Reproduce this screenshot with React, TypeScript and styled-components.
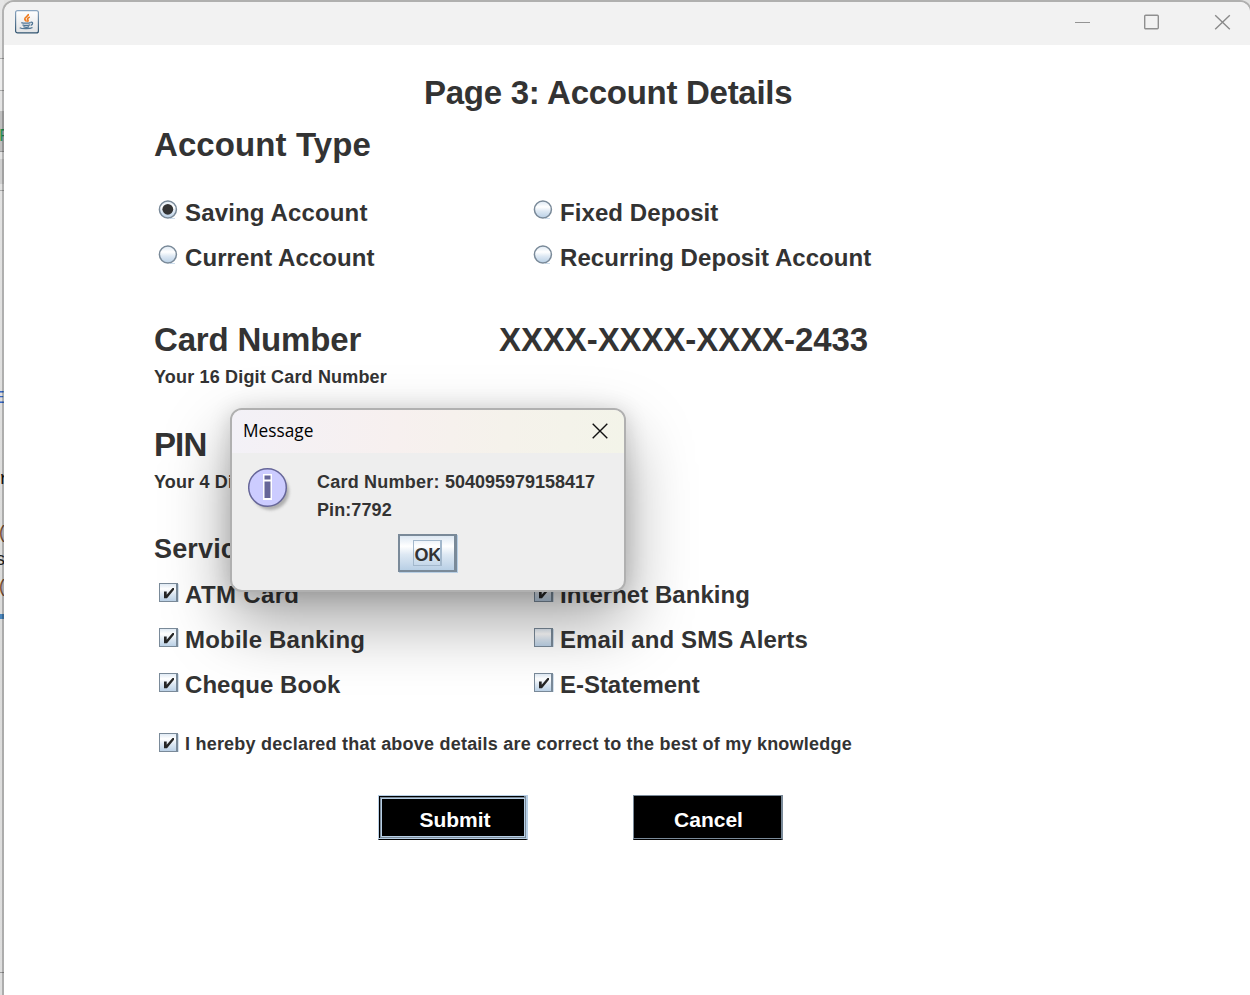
import React from "react";
import styled, { createGlobalStyle } from "styled-components";

const GlobalStyle = createGlobalStyle`
  * { box-sizing: border-box; }
  html, body { margin: 0; padding: 0; background: #fff; overflow: hidden; }
  body { font-family: "Liberation Sans", Arial, sans-serif; }
`;

const Desktop = styled.div`
  display: flex;
  width: 1250px;
  height: 995px;
  overflow: hidden;
  background: #e2e2e1;
`;

const Sliver = styled.div`
  flex: none;
  width: 4px;
  height: 995px;
  overflow: hidden;
  display: flex;
  flex-direction: column;
  background: linear-gradient(#e6e6e6, #dcdcdb 60%, #dedede);
`;

const SliverPart = styled.div<{ $h: number; $bg?: string }>`
  flex: none;
  height: ${(p) => p.$h}px;
  background: ${(p) => p.$bg ?? "transparent"};
`;

const SliverGlyph = styled.div<{ $h: number; $color: string; $shift: number }>`
  flex: none;
  height: ${(p) => p.$h}px;
  font: 18px / ${(p) => p.$h}px "Liberation Mono", monospace;
  color: ${(p) => p.$color};
  text-indent: ${(p) => p.$shift}px;
  white-space: nowrap;
`;

const Frame = styled.main`
  flex: none;
  width: 1250px;
  height: 1000px;
  margin-left: -2px;
  border: 2px solid rgba(0, 0, 0, 0.22);
  border-radius: 12px 12px 0 0;
  background: #fff;
  background-clip: padding-box;
  overflow: hidden;
`;

const TitleBar = styled.header`
  display: flex;
  align-items: center;
  justify-content: space-between;
  height: 43px;
  padding: 0 19px 3px 11px;
  background: #f2f2f2;
`;

const WindowControls = styled.div`
  display: flex;
  gap: 54px;
`;

const Content = styled.section`
  display: flex;
  flex-direction: column;
  padding: 25px 0 0 150px;
  color: #333;
  font-weight: 700;
`;

const Row = styled.div<{ $gap?: number; $h?: number; $indent?: number }>`
  display: flex;
  align-items: center;
  height: ${(p) => p.$h ?? 45}px;
  margin-top: ${(p) => p.$gap ?? 0}px;
  padding-left: ${(p) => p.$indent ?? 0}px;
  white-space: nowrap;
`;

const Text = styled.span<{ $size: number; $track?: number; $w?: number }>`
  flex: none;
  font-size: ${(p) => p.$size}px;
  line-height: 1;
  letter-spacing: ${(p) => p.$track ?? 0}px;
  width: ${(p) => (p.$w ? `${p.$w}px` : "auto")};
`;

const Option = styled.label<{ $lift?: number }>`
  display: flex;
  align-items: center;
  flex: none;
  width: 375px;
  padding-left: 4px;
  svg { flex: none; margin: 0 7px ${(p) => p.$lift ?? 4}px 0; }
`;

const BlackButton = styled.button<{ $focused?: boolean }>`
  width: 150px;
  height: 45px;
  padding: 4px 0 0 2px;
  border: solid ${(p) => (p.$focused ? "#b8cfe5" : "#7a8a99")};
  border-width: 1px 2px 1px 1px;
  border-bottom: 1px solid #000;
  background: #000;
  color: #fff;
  font: 700 21px "Liberation Sans", Arial, sans-serif;
  box-shadow: ${(p) =>
    p.$focused
      ? "inset 0 -1px #b8cfe5, inset -2px 0 #7a8a99, inset 1px 1px #000, inset 2px 2px #7a8a99, inset 0 -2px #7a8a99"
      : "inset 0 -1px #7a8a99"};
`;

const FocusRing = styled.span`
  display: flex;
  align-items: center;
  justify-content: center;
  width: 144px;
  height: 39px;
  margin: -4px 0 0 0;
  padding: 5px 0 0 4px;
  border: 1px solid #b8cfe5;
`;

const Buttons = styled.div`
  display: flex;
  gap: 105px;
  margin: 36px 0 0 224px;
`;

const Dialog = styled.div`
  position: absolute;
  left: 230px;
  top: 408px;
  width: 396px;
  height: 184px;
  border: 2px solid #b0b0b0;
  border-radius: 12px;
  background: #eee;
  background-clip: padding-box;
  overflow: hidden;
  color: #333;
  font-weight: 700;
  box-shadow: 0 30px 66px rgba(0, 0, 0, 0.36), 0 2px 22px rgba(0, 0, 0, 0.16);
`;

const DialogTitle = styled.div`
  display: flex;
  align-items: center;
  justify-content: space-between;
  height: 43px;
  padding: 0 16px 2px 11px;
  background: linear-gradient(95deg, #f3f1f7, #f7f0ef 42%, #f5f2eb 70%, #f3f4e9);
  color: #000;
  font: 400 17.300px "Open Sans", "Noto Sans", sans-serif;
`;

const DialogBody = styled.div`
  display: flex;
  gap: 23px;
  height: 79px;
  padding: 14px 0 0 14px;
`;

const Lines = styled.div`
  display: flex;
  flex-direction: column;
  padding-top: 1px;
`;

const DialogActions = styled.div`
  display: flex;
  justify-content: center;
  padding: 2px 1px 0 0;
`;

const OkButton = styled.button`
  display: flex;
  justify-content: center;
  align-items: center;
  width: 59px;
  height: 38px;
  padding: 0;
  border: solid #7a8a99;
  border-width: 2px 3px 2px 2px;
  background: linear-gradient(#dde8f3, #fff 30%, #dde8f3 55%, #b8cfe5);
  box-shadow: 1px 1px #b8cfe5;
`;

const OkLabel = styled.span`
  width: 29px;
  height: 26px;
  padding-left: 1px;
  overflow: hidden;
  border: 1px solid #a3b8cc;
  border-right-width: 2px;
  color: #333;
  font: 700 18px/28px "Liberation Sans", Arial, sans-serif;
  letter-spacing: -0.3px;
  text-align: left;
`;

const JavaIcon = () => (
  <svg width="24" height="24" viewBox="0 0 24 24">
    <defs>
      <linearGradient id="jb" x2="0" y2="1">
        <stop offset="0" stopColor="#8aa5c0" />
        <stop offset="1" stopColor="#315470" />
      </linearGradient>
      <linearGradient id="jf" x2="0" y2="1">
        <stop offset="0" stopColor="#fff" />
        <stop offset="1" stopColor="#e1e3e5" />
      </linearGradient>
    </defs>
    <rect x=".6" y=".6" width="22.8" height="22.3" rx="2" fill="url(#jf)" stroke="url(#jb)" strokeWidth="1.2" />
    <path d="M13.3 4c.8 2-3.8 3-3.500 5 .2 1.300 1.500 1.600 1.300 2.700M14.800 7c-2.200 1-2.800 2-1.900 3 .5.700 0 1.300-.6 1.700" fill="none" stroke="#ef7d21" strokeWidth="1.700" />
    <path d="M6.300 12.600c2 .8 7.500.7 9.200 0M7.500 14.800c2 .7 5.500.700 7.500 0M8.400 16.700c1.500.6 4.300.6 5.700 0M15.600 12.400c2.600-.9 2.700 2 .1 2.900M4.700 17.700c2.300 1.400 10.500 1.400 12.800-.3" fill="none" stroke="#517695" strokeWidth="1.300" />
  </svg>
);

const Radio = ({ on }: { on?: boolean }) => (
  <svg width="20" height="20" viewBox="0 0 20 20">
    <defs>
      <linearGradient id="rg" x2="0" y2="1">
        <stop offset="0" stopColor="#dde8f3" />
        <stop offset=".35" stopColor="#fff" />
        <stop offset=".6" stopColor="#dde8f3" />
        <stop offset="1" stopColor="#b8cfe5" />
      </linearGradient>
    </defs>
    <path d="M12 18.500h5" stroke="#cfdfee" />
    <circle cx="9.900" cy="9.500" r="8.500" fill="url(#rg)" stroke="#7a8a99" strokeWidth="1.500" />
    {on && <circle cx="9.800" cy="9.300" r="5.400" fill="#333" />}
  </svg>
);

const Check = ({ on }: { on?: boolean }) => (
  <svg width="20" height="20" viewBox="0 0 20 20" overflow="visible">
    <path d="M20.500 1v18" stroke="#d3e1ee" />
    <rect x="1.500" y=".5" width="18" height="18" fill="url(#cg)" stroke="#7a8a99" />
    <path d="M19 0v19" stroke="#7a8a99" strokeWidth="2" />
    {on && <path d="M6 8.500h2.700v3.300L14.500 5H16v1.700l-7 8.600H6z" fill="#262626" />}
    <defs>
      <linearGradient id="cg" x2="0" y2="1">
        <stop offset="0" stopColor="#dde8f3" />
        <stop offset=".3" stopColor="#fff" />
        <stop offset=".6" stopColor="#dde8f3" />
        <stop offset="1" stopColor="#b8cfe5" />
      </linearGradient>
    </defs>
  </svg>
);

const InfoIcon = () => (
  <svg width="48" height="48" viewBox="0 0 48 48">
    <defs>
      <filter id="soft" x="-20%" y="-20%" width="150%" height="150%">
        <feGaussianBlur stdDeviation="1.700" />
      </filter>
    </defs>
    <circle cx="24.500" cy="24.500" r="18.500" fill="#999" opacity=".75" filter="url(#soft)" />
    <circle cx="21.500" cy="20.500" r="18.800" fill="#ccf" stroke="#669" strokeWidth="1.500" />
    <path d="M17 7h9v26h-9z" fill="#fff" />
    <path d="M18.500 8.500h6v4h-6zM18.500 14.500h6v16.500h-6z" fill="#669" />
  </svg>
);

export default function App() {
  return (
    <>
      <GlobalStyle />
      <Desktop>
        <Sliver>
          <SliverPart $h={58} />
          <SliverPart $h={1} $bg="#aaa" />
          <SliverPart $h={31} $bg="#ededed" />
          <SliverPart $h={1} $bg="#aaa" />
          <SliverPart $h={20} />
          <SliverPart $h={14} $bg="#bfbfbf" />
          <SliverPart $h={26} $bg="#bfbfbf">
            <SliverGlyph $h={22} $color="#2a9455" $shift={-1}>P</SliverGlyph>
          </SliverPart>
          <SliverPart $h={1} $bg="#999" />
          <SliverPart $h={7} />
          <SliverPart $h={25} $bg="#cfcfcf" />
          <SliverPart $h={6} />
          <SliverPart $h={1} $bg="#aaa" />
          <SliverPart $h={197} />
          <SliverGlyph $h={20} $color="#3867c8" $shift={-6}>E</SliverGlyph>
          <SliverPart $h={61} />
          <SliverGlyph $h={20} $color="#111" $shift={-1}>r</SliverGlyph>
          <SliverPart $h={34} />
          <SliverGlyph $h={20} $color="#7c5030" $shift={-3}>(</SliverGlyph>
          <SliverPart $h={7} />
          <SliverGlyph $h={20} $color="#222" $shift={-5}>s</SliverGlyph>
          <SliverPart $h={7} />
          <SliverGlyph $h={20} $color="#7c5030" $shift={-3}>(</SliverGlyph>
          <SliverPart $h={17} />
          <SliverPart $h={5} $bg="#4a86bd" />
          <SliverPart $h={353} />
          <SliverPart $h={1} $bg="#999" />
        </Sliver>
        <Frame>
          <TitleBar>
            <JavaIcon />
            <WindowControls>
              <svg width="15" height="16"><path d="M0 8.500h15" stroke="#949494" /></svg>
              <svg width="15" height="16"><rect x=".7" y="1.200" width="13.600" height="13.600" rx="1" fill="none" stroke="#8f8f8f" strokeWidth="1.400" /></svg>
              <svg width="18" height="16"><path d="M2.200 1.200l14.600 14M16.800 1.200L2.200 15.200" stroke="#8a8a8a" strokeWidth="1.400" /></svg>
            </WindowControls>
          </TitleBar>
          <Content>
            <Row $indent={270}><Text $size={33} $track={-0.28}>Page 3: Account Details</Text></Row>
            <Row $gap={7}><Text $size={33} $track={0.09}>Account Type</Text></Row>
            <Row $gap={23}>
              <Option $lift={6}><Radio on /><Text $size={24} $track={0.15}>Saving Account</Text></Option>
              <Option $lift={6}><Radio /><Text $size={24} $track={0.08}>Fixed Deposit</Text></Option>
            </Row>
            <Row>
              <Option $lift={6}><Radio /><Text $size={24} $track={0.08}>Current Account</Text></Option>
              <Option $lift={6}><Radio /><Text $size={24} $track={0.06}>Recurring Deposit Account</Text></Option>
            </Row>
            <Row $gap={37}>
              <Text $size={33} $track={-0.18} $w={345}>Card Number</Text>
              <Text $size={33} $track={-0.08}>XXXX-XXXX-XXXX-2433</Text>
            </Row>
            <Row $h={30}><Text $size={18} $track={0.17}>Your 16 Digit Card Number</Text></Row>
            <Row $gap={30}><Text $size={33} $track={-0.9}>PIN</Text></Row>
            <Row $h={30}><Text $size={18} $track={0.17}>Your 4 Digit PIN</Text></Row>
            <Row $gap={30}><Text $size={27} $track={0.15}>Services</Text></Row>
            <Row>
              <Option><Check on /><Text $size={24} $track={0.35}>ATM Card</Text></Option>
              <Option><Check on /><Text $size={24} $track={0.03}>Internet Banking</Text></Option>
            </Row>
            <Row>
              <Option><Check on /><Text $size={24} $track={0.2}>Mobile Banking</Text></Option>
              <Option><Check /><Text $size={24} $track={0.1}>Email and SMS Alerts</Text></Option>
            </Row>
            <Row>
              <Option><Check on /><Text $size={24} $track={0.06}>Cheque Book</Text></Option>
              <Option><Check on /><Text $size={24} $track={-0.04}>E-Statement</Text></Option>
            </Row>
            <Row $gap={22} $h={30}>
              <Option $lift={2}><Check on /><Text $size={18} $track={0.22}>I hereby declared that above details are correct to the best of my knowledge</Text></Option>
            </Row>
            <Buttons>
              <BlackButton $focused><FocusRing>Submit</FocusRing></BlackButton>
              <BlackButton>Cancel</BlackButton>
            </Buttons>
          </Content>
        </Frame>
        <Dialog>
          <DialogTitle>
            <span>Message</span>
            <svg width="16" height="16"><path d="M.7.700l14.600 14.600M15.300.700L.7 15.300" stroke="#111" strokeWidth="1.400" /></svg>
          </DialogTitle>
          <DialogBody>
            <InfoIcon />
            <Lines>
              <Row $h={28}>
                <Text $size={18} $track={0.22}>Card Number:&nbsp;</Text>
                <Text $size={18}>504095979158417</Text>
              </Row>
              <Row $h={28}><Text $size={18} $track={0.09}>Pin:7792</Text></Row>
            </Lines>
          </DialogBody>
          <DialogActions>
            <OkButton><OkLabel>OK</OkLabel></OkButton>
          </DialogActions>
        </Dialog>
      </Desktop>
    </>
  );
}
